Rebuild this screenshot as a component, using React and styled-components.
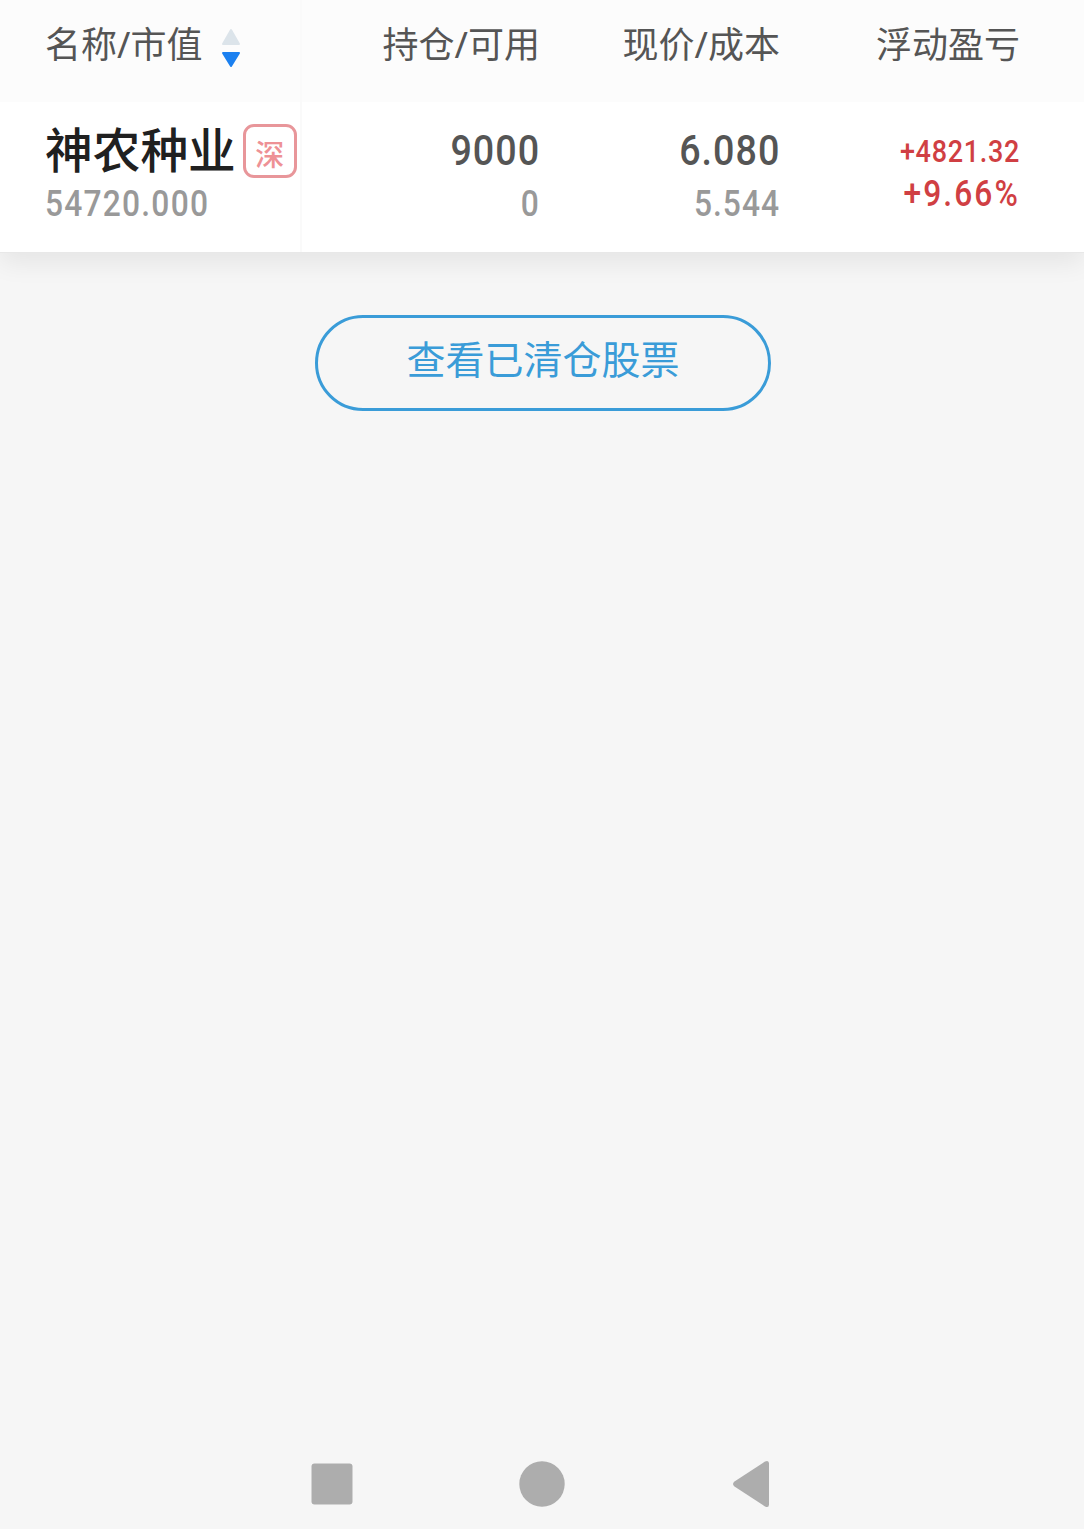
import React from 'react';
import styled, { createGlobalStyle } from 'styled-components';

const GlobalStyle = createGlobalStyle`
    body {
        margin: 0;
        background: #f6f6f6;
        font-family: "Noto Sans CJK SC", sans-serif;
    }
`;

const Container = styled.div`
    display: flex;
    flex-direction: column;
    height: 1529px;
    overflow: hidden;
`;

const Table = styled.section`
    height: 252px;
    background: #ffffff;
    border-bottom: 1px solid #e8e8e8;
    box-shadow: 0 10px 24px rgba(0, 0, 0, 0.07);
`;

const Row = styled.div`
    display: grid;
    grid-template-columns: 302px 238px 240px 240px;
    box-sizing: border-box;
`;

const HeaderRow = styled(Row)`
    height: 102px;
    background: #fcfcfc;
    color: #555555;
    font-family: "Noto Sans", "Noto Sans CJK SC", sans-serif;
    font-size: 36px;
    line-height: 52px;
`;

const StockRow = styled(Row)`
    height: 150px;
`;

const Cell = styled.div`
    display: flex;
    flex-direction: column;
    align-items: flex-end;
    padding-top: ${(props) => props.$top || 18}px;
`;

const NameCell = styled(Cell)`
    align-items: flex-start;
    padding-left: 45px;
    border-right: 2px solid #fafafa;
`;

const SortLabel = styled.div`
    display: flex;
    gap: 19px;
`;

const SortIcon = styled.svg`
    width: 20px;
    height: 40px;
    margin-top: 9px;
`;

const StockName = styled.div`
    display: flex;
    height: 60px;
    color: #202020;
    font-size: 47.7px;
    font-weight: 500;
    line-height: 56px;
    white-space: nowrap;
`;

const Market = styled.span`
    box-sizing: border-box;
    flex: none;
    width: 54px;
    height: 54px;
    margin: 4px 0 0 7px;
    border: 3px solid #e8969a;
    border-radius: 11px;
    color: #ee9195;
    font-size: 29px;
    line-height: 52px;
    text-align: center;
`;

// narrow digits for prices and amounts
const Num = styled.span`
    color: ${(props) => props.$color};
    font-family: Roboto, sans-serif;
    font-size: ${(props) => props.$size}px;
    font-weight: 500;
    line-height: ${(props) => props.$line}px;
    letter-spacing: ${(props) => props.$space}px;
    transform: scaleX(0.87);
    transform-origin: ${(props) => (props.$left ? 'left' : 'right')};
`;

const ClearedButton = styled.button`
    box-sizing: border-box;
    align-self: center;
    width: 456px;
    height: 96px;
    margin: 62px 0 0 2px;
    padding: 0 0 13px;
    border: 3px solid #3a9cd8;
    border-radius: 48px;
    background: transparent;
    color: #3a9cd8;
    font-family: inherit;
    font-size: 39px;
    line-height: 56px;
`;

const NavBar = styled.nav`
    display: flex;
    justify-content: center;
    align-items: center;
    gap: 162px;
    height: 90px;
    margin-top: auto;
`;

const NavIcon = styled.svg`
    width: 48px;
    height: 48px;
    fill: #adadad;
`;

const columns = ['持仓/可用', '现价/成本', '浮动盈亏'];

export default function App() {
    return (
        <Container>
            <GlobalStyle />
            <Table>
                <HeaderRow>
                    <NameCell $top={19}>
                        <SortLabel>
                            名称/市值
                            <SortIcon viewBox="0 0 20 40">
                                <path d="M10 2 L18 16 H2 Z" fill="#dce4ea" stroke="#dce4ea" strokeWidth="2" strokeLinejoin="round" />
                                <path d="M2 25 H18 L10 38 Z" fill="#1b80f0" stroke="#1b80f0" strokeWidth="2" strokeLinejoin="round" />
                            </SortIcon>
                        </SortLabel>
                    </NameCell>
                    {columns.map((name) => (
                        <Cell key={name} $top={19}>{name}</Cell>
                    ))}
                </HeaderRow>
                <StockRow>
                    <NameCell>
                        <StockName>
                            神农种业
                            <Market>深</Market>
                        </StockName>
                        <Num $left $size={36.5} $line={48} $color="#999999" $space={1.4}>54720.000</Num>
                    </NameCell>
                    <Cell $top={22}>
                        <Num $size={43.3} $line={54} $color="#555555" $space={1.2}>9000</Num>
                        <Num $size={36.5} $line={52} $color="#999999" $space={1.2}>0</Num>
                    </Cell>
                    <Cell $top={22}>
                        <Num $size={43.3} $line={54} $color="#555555" $space={1.2}>6.080</Num>
                        <Num $size={36.5} $line={52} $color="#999999" $space={1.2}>5.544</Num>
                    </Cell>
                    <Cell $top={29}>
                        <Num $size={31} $line={42} $color="#d03f43" $space={0.8}>+4821.32</Num>
                        <Num $size={36.5} $line={42} $color="#d03f43" $space={2.4}>+9.66%</Num>
                    </Cell>
                </StockRow>
            </Table>
            <ClearedButton>查看已清仓股票</ClearedButton>
            <NavBar>
                <NavIcon viewBox="0 0 48 48">
                    <rect x="3.5" y="3.5" width="41" height="41" rx="3" />
                </NavIcon>
                <NavIcon viewBox="0 0 48 48">
                    <circle cx="24" cy="24" r="22.7" />
                </NavIcon>
                <NavIcon viewBox="0 0 48 48">
                    <path d="M6.5 21.5 L37 1.5 Q41 -0.2 41 3.5 V44.5 Q41 48.2 37 46.5 L6.5 26.5 Q3.5 24 6.5 21.5 Z" />
                </NavIcon>
            </NavBar>
        </Container>
    );
}
